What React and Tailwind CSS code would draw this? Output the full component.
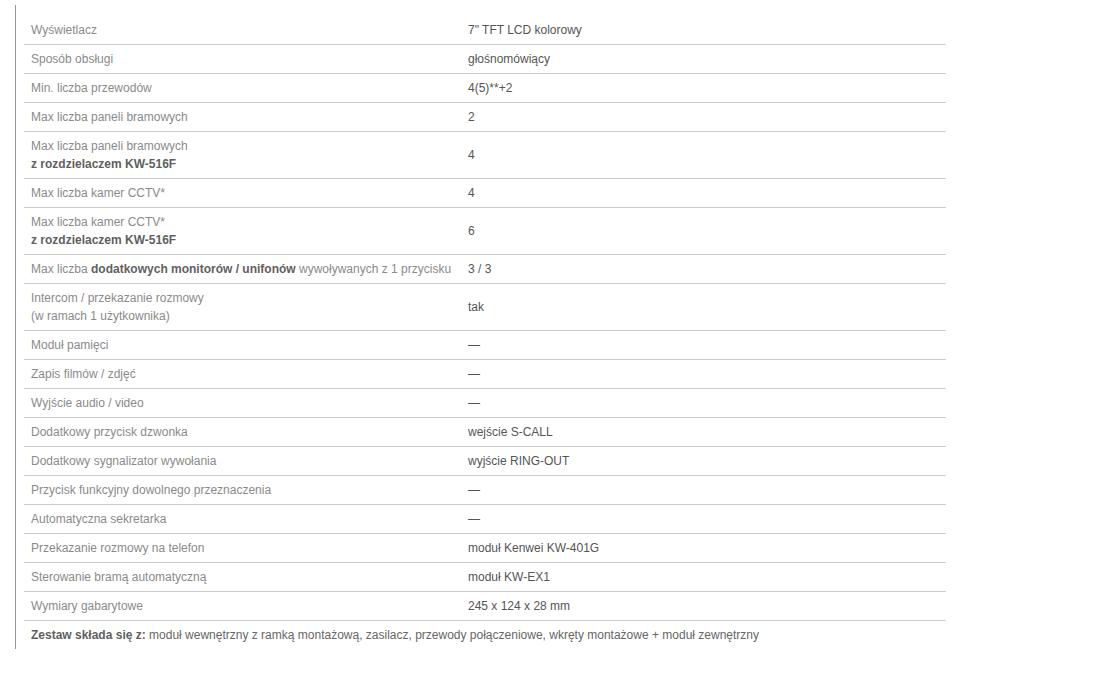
const rows = [
  [<>Wyświetlacz</>, "7\" TFT LCD kolorowy"],
  [<>Sposób obsługi</>, "głośnomówiący"],
  [<>Min. liczba przewodów</>, "4(5)**+2"],
  [<>Max liczba paneli bramowych</>, "2"],
  [<>Max liczba paneli bramowych<br /><b className="text-[#5f5f5f]">z rozdzielaczem KW-516F</b></>, "4"],
  [<>Max liczba kamer CCTV*</>, "4"],
  [<>Max liczba kamer CCTV*<br /><b className="text-[#5f5f5f]">z rozdzielaczem KW-516F</b></>, "6"],
  [<>Max liczba <b className="text-[#5f5f5f]">dodatkowych monitorów / unifonów</b> wywoływanych z 1 przycisku</>, "3 / 3"],
  [<>Intercom / przekazanie rozmowy<br />(w ramach 1 użytkownika)</>, "tak"],
  [<>Moduł pamięci</>, "—"],
  [<>Zapis filmów / zdjęć</>, "—"],
  [<>Wyjście audio / video</>, "—"],
  [<>Dodatkowy przycisk dzwonka</>, "wejście S-CALL"],
  [<>Dodatkowy sygnalizator wywołania</>, "wyjście RING-OUT"],
  [<>Przycisk funkcyjny dowolnego przeznaczenia</>, "—"],
  [<>Automatyczna sekretarka</>, "—"],
  [<>Przekazanie rozmowy na telefon</>, "moduł Kenwei KW-401G"],
  [<>Sterowanie bramą automatyczną</>, "moduł KW-EX1"],
  [<>Wymiary gabarytowe</>, "245 x 124 x 28 mm"],
];

export default function App() {
  return (
    <div className="w-[1120px] h-[674px] bg-white" style={{ fontFamily: '"Liberation Sans", Arial, sans-serif' }}>
      <div className="ml-[15px] mt-[5px] w-[932px] border-l border-[#999] pl-2 pt-[11px]">
        <table className="w-[922px] border-collapse text-[12px] leading-[18px]">
          <tbody>
            {rows.map(([label, value], i) => (
              <tr key={i} className="border-b border-[#ccc]">
                <td className="w-[437px] px-[7px] py-[5px] align-middle text-[#8a8a8a]">{label}</td>
                <td className="px-[7px] py-[5px] align-middle text-[#555]">{value}</td>
              </tr>
            ))}
            <tr>
              <td colSpan={2} className="px-[7px] py-[5px] text-[#666]">
                <b className="text-[#5f5f5f]">Zestaw składa się z:</b> moduł wewnętrzny z ramką montażową, zasilacz, przewody połączeniowe, wkręty montażowe + moduł zewnętrzny
              </td>
            </tr>
          </tbody>
        </table>
      </div>
    </div>
  );
}
